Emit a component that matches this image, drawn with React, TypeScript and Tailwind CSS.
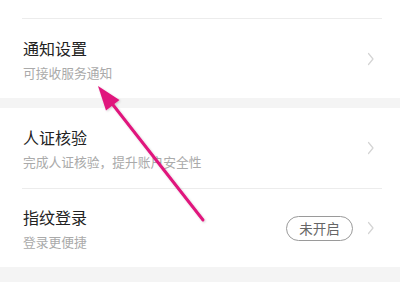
import React from 'react'

const font = { fontFamily: '"Noto Sans CJK SC", "Noto Sans", sans-serif' }

function Chevron() {
  return (
    <svg width="8" height="14" viewBox="0 0 8 14" className="shrink-0">
      <path d="M1.5 1.5l4.5 5.5-4.5 5.5" fill="none" stroke="#d4d4d4" strokeWidth="1.2" strokeLinecap="round" strokeLinejoin="round" />
    </svg>
  )
}

interface RowProps {
  title: string
  sub: string
  right?: React.ReactNode
  className?: string
}

function Row({ title, sub, right, className = '' }: RowProps) {
  return (
    <div className={`flex items-center pl-[23px] pr-[25px] ${className}`}>
      <div className="flex-1 flex flex-col gap-[5px]">
        <div className="text-[16px] leading-[22px] text-[#222]">{title}</div>
        <div className="text-[12.75px] leading-[17px] text-[#aaa]">{sub}</div>
      </div>
      {right}
      <Chevron />
    </div>
  )
}

export default function App() {
  return (
    <div className="relative w-[400px] h-[282px] overflow-hidden bg-white" style={font}>
      <div className="h-[19px] ml-[22px] mr-[18px] border-b border-[#ececec]" />
      <Row title="通知设置" sub="可接收服务通知" className="h-[79px]" />
      <div className="h-[10px] bg-[#f4f4f4]" />
      <Row title="人证核验" sub="完成人证核验，提升账户安全性" className="h-[80px]" />
      <div className="ml-[22px] mr-[18px] border-b border-[#ececec]" />
      <Row
        title="指纹登录"
        sub="登录更便捷"
        className="h-[78px]"
        right={
          <div className="mr-[14px] w-[67px] h-[25px] rounded-full border border-[#9a9a9a] flex items-center justify-center text-[13.5px] text-[#666]">
            未开启
          </div>
        }
      />
      <div className="h-[20px] bg-[#f4f4f4]" />

      <svg className="absolute inset-0 pointer-events-none" width="400" height="282" viewBox="0 0 400 282">
        <defs>
          <filter id="sh" x="-20%" y="-20%" width="140%" height="140%">
            <feDropShadow dx="1" dy="1" stdDeviation="0.8" floodColor="#000" floodOpacity="0.18" />
          </filter>
        </defs>
        <g filter="url(#sh)">
          <line x1="203" y1="220" x2="110" y2="101" stroke="#e0157d" strokeWidth="3" strokeLinecap="round" />
          <polygon points="98,86 119.5,100 106,110.5" fill="#e0157d" />
        </g>
      </svg>
    </div>
  )
}
